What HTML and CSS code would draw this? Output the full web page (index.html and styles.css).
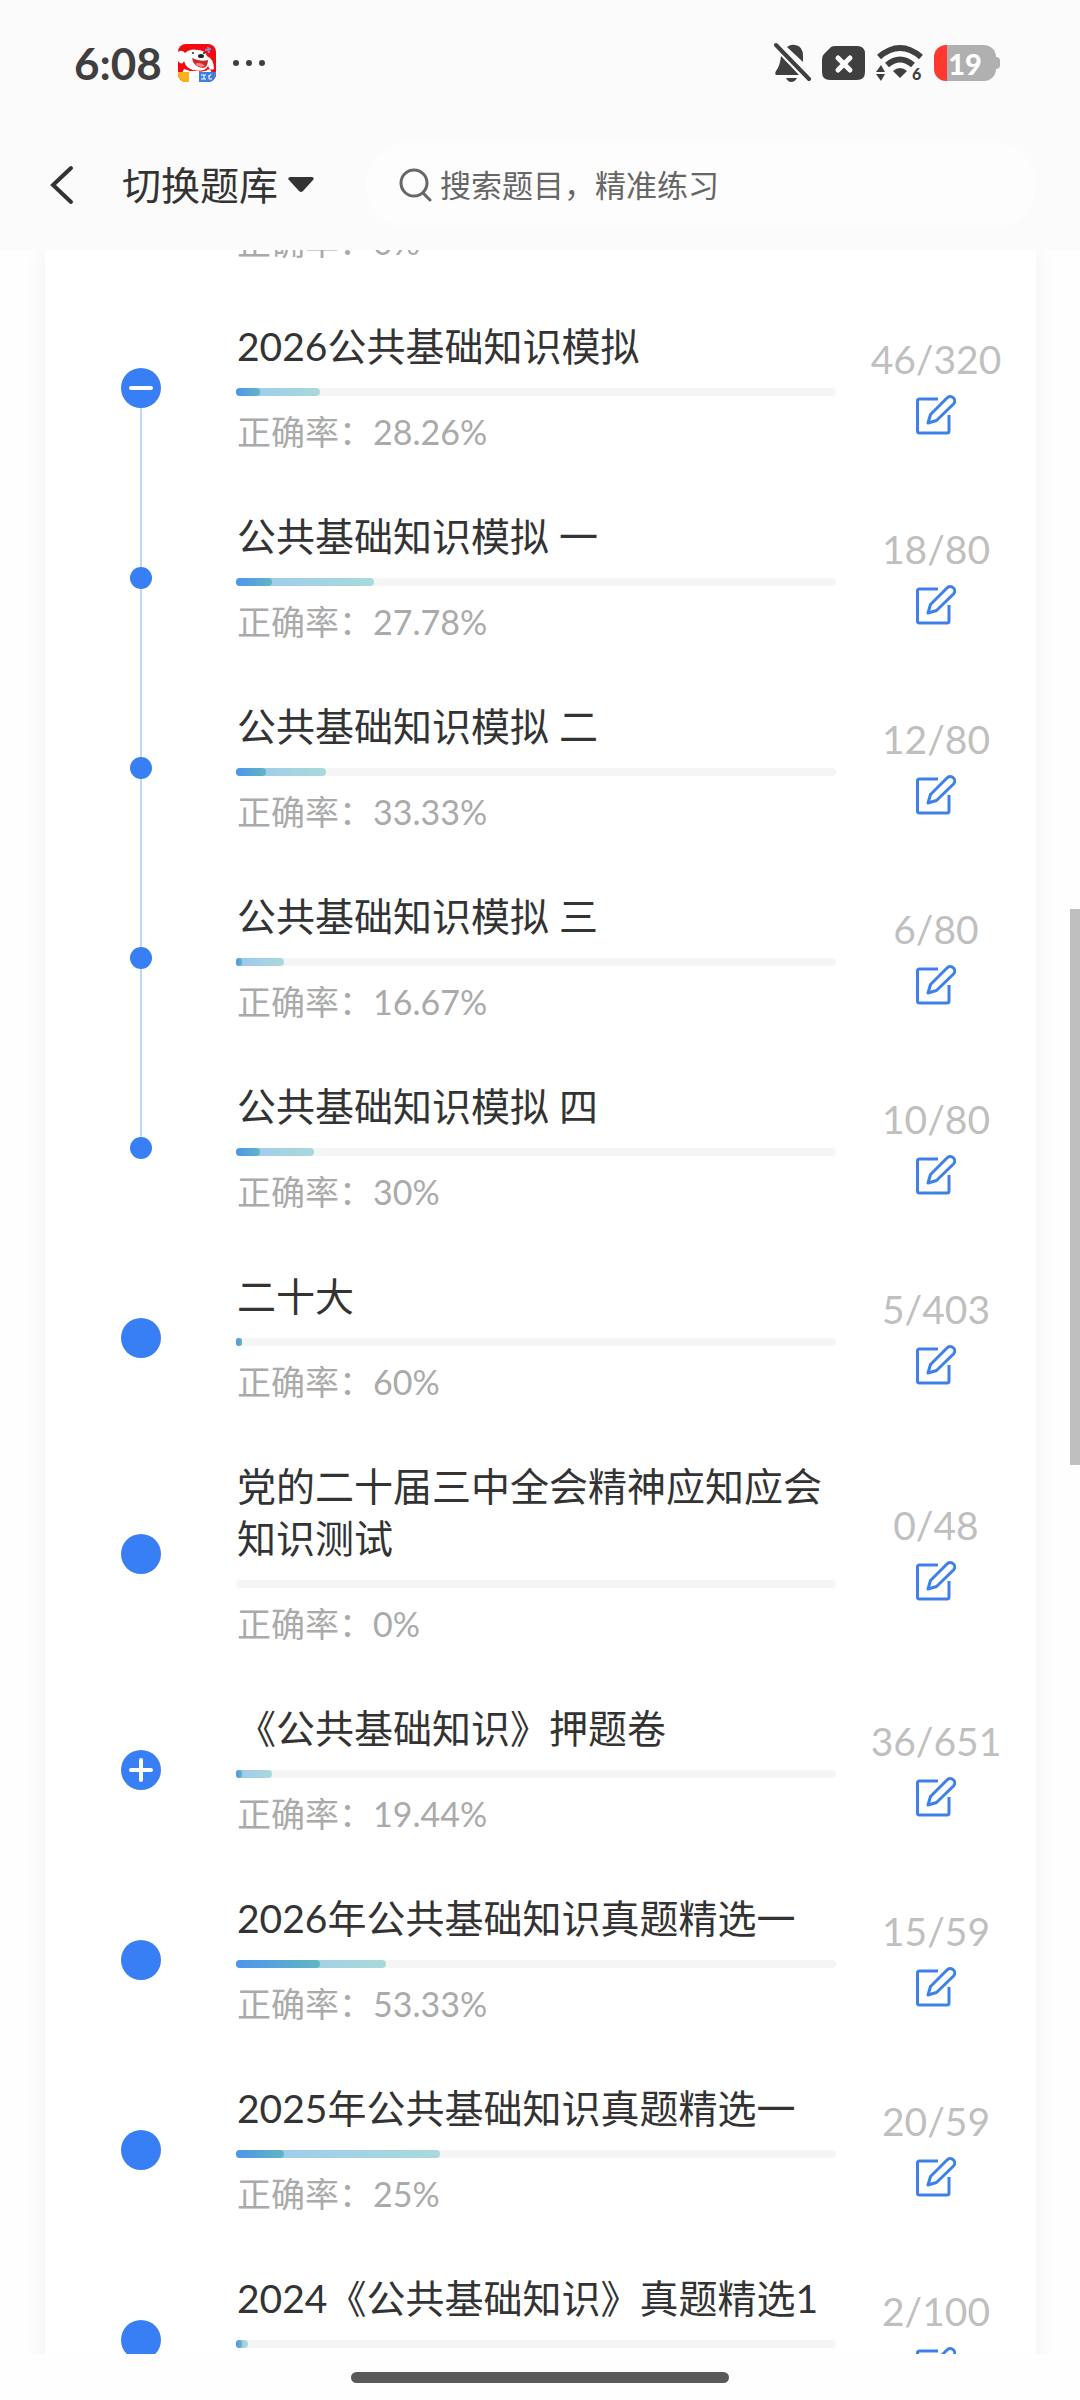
FILE: index.html
```
<!DOCTYPE html>
<html lang="zh-CN">
<head>
    <meta charset="UTF-8">
    <meta name="viewport" content="width=device-width, initial-scale=1.0">
    <title>切换题库</title>
    <link rel="stylesheet" href="styles.css">
</head>
<body>

    <svg class="sprite" aria-hidden="true">
        <symbol id="icon-edit" viewBox="0 0 40 40">
            <path d="M22 4H3.500Q1.500 4 1.500 6V36Q1.500 38 3.500 38H31Q33 38 33 36V20"/>
            <path d="M12 28L14.500 19.500L31 3A4.300 4.300 0 0 1 37.500 9L20.500 25.500Z"/>
        </symbol>
    </svg>

    <div class="status-bar">
        <span class="time">6:08</span>
        <svg class="app-icon" viewBox="0 0 38 38">
            <clipPath id="app-clip"><rect width="38" height="38" rx="8"/></clipPath>
            <g clip-path="url(#app-clip)">
                <rect width="38" height="38" fill="#f5090f"/>
                <path d="M0 8Q4 5 7 9Q12 4 20 6Q27 6 29 12Q36 15 36 25Q32 27 30 22Q28 27 20 27Q8 26 6 17Q4 22 0 17Z" fill="#fff"/>
                <path d="M14 14Q22 18 30 16Q30 23 25 24Q15 23 14 14Z" fill="#c92a2c"/>
                <path d="M17 20Q22 17 27 22Q21 24 17 20Z" fill="#ff8a80"/>
                <ellipse cx="23" cy="12" rx="3" ry="2" fill="#222"/>
                <circle cx="15" cy="9" r="1" fill="#222"/>
                <circle cx="26" cy="9" r="1" fill="#222"/>
                <path d="M27 6L33 5M30 3L31 9" stroke="#8d8bc4" stroke-width="2"/>
                <path d="M6 25Q18 30 32 25L34 29H4Z" fill="#fff"/>
                <path d="M9 25Q18 29 29 26" stroke="#f5090f" stroke-width="1" fill="none"/>
                <rect y="28" width="11" height="10" fill="#fbb11c"/>
                <rect x="11" y="27" width="10" height="11" fill="#fff"/>
                <rect x="21" y="28" width="17" height="10" fill="#3c80e0"/>
                <path d="M23 31H28M23 35H28M26 31V35M31 31V35H34M33 30L31 33" stroke="#fff" stroke-width="1" fill="none"/>
            </g>
        </svg>
        <svg class="more" viewBox="0 0 34 8" fill="#3f3f3f">
            <circle cx="4" cy="4" r="3"/><circle cx="17" cy="4" r="3"/><circle cx="30" cy="4" r="3"/>
        </svg>
        <div class="status-icons">
            <svg width="38" height="42" viewBox="0 0 38 42">
                <path d="M13 5Q17 2 21 3Q29 4 29 14V20ZM7 14Q6 24 2 29Q0 33 3 33H25Z" fill="#3f3f3f"/>
                <path d="M12 36H23Q21 40 17 40Q14 40 12 36Z" fill="#3f3f3f"/>
                <path d="M6 2L37 34" stroke="#fbfbfb" stroke-width="3"/>
                <path d="M2 3L35 37" stroke="#3f3f3f" stroke-width="4" stroke-linecap="round"/>
            </svg>
            <svg width="44" height="36" viewBox="0 0 44 36">
                <path d="M13 1H35Q43 1 43 9V27Q43 35 35 35H8Q0 35 0 27V14Q0 11 2 9L9 2Q11 1 13 1Z" fill="#3f3f3f"/>
                <path d="M16 13L28 25M28 13L16 25" stroke="#fff" stroke-width="5" stroke-linecap="round"/>
            </svg>
            <svg width="48" height="40" viewBox="0 0 48 40">
                <path d="M3 14Q24 -4 45 14" stroke="#3f3f3f" stroke-width="6" fill="none"/>
                <path d="M11 22Q24 11 37 22" stroke="#3f3f3f" stroke-width="6" fill="none"/>
                <path d="M17 28Q24 22 31 28L24 35Z" fill="#3f3f3f"/>
                <path d="M5 22L9 29H0ZM0 31H9L5 38Z" fill="#3f3f3f"/>
                <text x="36" y="37" font-size="16" font-weight="900" fill="#3f3f3f">6</text>
            </svg>
            <div class="battery"><span>19</span></div>
        </div>
    </div>

    <header class="top-bar">
        <button class="back" aria-label="返回">
            <svg width="24" height="40" viewBox="0 0 24 40"><path d="M21 3L3 20L21 37"/></svg>
        </button>
        <button class="switch">
            切换题库
            <svg width="26" height="16" viewBox="0 0 26 16"><path d="M2 0H24Q27 1 25 3L15 14Q13 16 11 14L1 3Q-1 1 2 0Z"/></svg>
        </button>
        <label class="search">
            <svg width="34" height="34" viewBox="0 0 34 34"><circle cx="16" cy="15" r="13"/><path d="M25 25L32 32"/></svg>
            <input type="search" placeholder="搜索题目，精准练习" aria-label="搜索题目">
        </label>
    </header>

    <main class="content">
        <ul class="card" id="bank-list">
            <li class="item-cut">
                <div class="info"><p class="rate">正确率：0%</p></div>
            </li>
        </ul>
        <div class="scrollbar"></div>
    </main>

    <footer class="home-bar"><span></span></footer>

    <script>
        // done / right: ancho de las dos barras, en %
        const items = [
            { name: '2026公共基础知识模拟', count: '46/320', rate: '28.26%', done: 14, right: 4, node: 'minus' },
            { name: '公共基础知识模拟 一', count: '18/80', rate: '27.78%', done: 23, right: 6, node: 'child' },
            { name: '公共基础知识模拟 二', count: '12/80', rate: '33.33%', done: 15, right: 5, node: 'child' },
            { name: '公共基础知识模拟 三', count: '6/80', rate: '16.67%', done: 8, right: 1, node: 'child' },
            { name: '公共基础知识模拟 四', count: '10/80', rate: '30%', done: 13, right: 4, node: 'child last' },
            { name: '二十大', count: '5/403', rate: '60%', done: 1, right: 1, node: '' },
            { name: '党的二十届三中全会精神应知应会知识测试', count: '0/48', rate: '0%', done: 0, right: 0, node: '' },
            { name: '《公共基础知识》押题卷', count: '36/651', rate: '19.44%', done: 6, right: 1, node: 'plus' },
            { name: '2026年公共基础知识真题精选一', count: '15/59', rate: '53.33%', done: 25, right: 14, node: '' },
            { name: '2025年公共基础知识真题精选一', count: '20/59', rate: '25%', done: 34, right: 8, node: '' },
            { name: '2024《公共基础知识》真题精选1', count: '2/100', rate: '', done: 2, right: 1, node: '' }
        ];

        function nodeHtml(node) {
            if (node === 'minus') {
                return '<button class="dot" aria-label="收起"><svg viewBox="0 0 40 40"><path d="M10 20H30"/></svg></button>';
            }
            if (node === 'plus') {
                return '<button class="dot" aria-label="展开"><svg viewBox="0 0 40 40"><path d="M10 20H30M20 10V30"/></svg></button>';
            }
            return '<span class="dot"></span>';
        }

        const list = document.getElementById('bank-list');

        items.forEach(item => {
            const li = document.createElement('li');
            li.className = 'item';
            li.innerHTML = `
                <div class="node ${item.node}">${nodeHtml(item.node)}</div>
                <div class="info">
                    <h3>${item.name}</h3>
                    <div class="track">
                        <div class="done" style="width: ${item.done}%"></div>
                        <div class="right" style="width: ${item.right}%"></div>
                    </div>
                    ${item.rate ? `<p class="rate">正确率：${item.rate}</p>` : '<p class="rate"></p>'}
                </div>
                <div class="side">
                    <span class="count">${item.count}</span>
                    <button class="edit" aria-label="练习"><svg><use href="#icon-edit"/></svg></button>
                </div>`;
            list.appendChild(li);
        });
    </script>

</body>
</html>
```
FILE: styles.css
```
* {
    box-sizing: border-box;
}

body {
    font-family: Lato, "Noto Sans CJK SC", sans-serif;
    background: #fefefe;
    color: #333;
    margin: 0;
    height: 100vh;
    display: flex;
    flex-direction: column;
}

button {
    border: 0;
    padding: 0;
    background: none;
    font: inherit;
    color: inherit;
    display: flex;
    align-items: center;
}

.sprite {
    display: none;
}

/* barra de estado */
.status-bar {
    display: flex;
    align-items: center;
    height: 126px;
    padding: 0 84px 0 74px;
    background: #fbfbfb;
    color: #3f3f3f;
    flex-shrink: 0;
}

.time {
    font-size: 44px;
    font-weight: bold;
}

.app-icon {
    width: 38px;
    height: 38px;
    margin-left: 16px;
}

.more {
    width: 34px;
    height: 8px;
    margin-left: 16px;
}

.status-icons {
    display: flex;
    align-items: center;
    gap: 10px;
    margin-left: auto;
}

.battery {
    display: flex;
    align-items: center;
    justify-content: center;
    width: 62px;
    height: 36px;
    border-radius: 12px;
    background: linear-gradient(to right, #ff3830 13px, #b0b0b0 13px);
    color: #fff;
    font-size: 29px;
    font-weight: 900;
    position: relative;
}

.battery::after {
    content: "";
    position: absolute;
    right: -4px;
    top: 12px;
    width: 4px;
    height: 12px;
    border-radius: 0 4px 4px 0;
    background: #b0b0b0;
}

/* cabecera */
.top-bar {
    display: flex;
    align-items: center;
    height: 124px;
    padding: 0 44px 6px 50px;
    background: #fbfbfb;
    flex-shrink: 0;
}

.back svg {
    fill: none;
    stroke: #333;
    stroke-width: 4;
    stroke-linecap: round;
}

.switch {
    margin-left: 48px;
    gap: 10px;
    font-size: 39px;
    line-height: 52px;
    fill: #333;
}

.search {
    flex: 1;
    display: flex;
    align-items: center;
    gap: 8px;
    height: 86px;
    margin-left: 52px;
    padding: 0 32px;
    border-radius: 43px;
    background: #fdfdfd;
}

.search svg {
    fill: none;
    stroke: #666;
    stroke-width: 3;
    stroke-linecap: round;
}

.search input {
    flex: 1;
    min-width: 0;
    border: 0;
    padding: 0;
    outline: none;
    background: none;
    font: inherit;
    font-size: 31px;
}

.search input::placeholder {
    color: #666;
}

/* lista */
.content {
    flex: 1;
    min-height: 0;
    overflow: hidden;
    padding: 0 44px 0 45px;
    position: relative;
}

.card {
    list-style: none;
    margin: 0;
    padding: 0;
    background: #fff;
    box-shadow: 0 0 24px rgba(0, 0, 0, 0.06);
}

.item {
    display: grid;
    grid-template-columns: 191px 1fr 200px;
}

/* fila de arriba, ya casi fuera de la vista */
.item-cut {
    display: flex;
    align-items: flex-end;
    height: 43px;
    padding-left: 191px;
}

.node {
    display: flex;
    flex-direction: column;
    align-items: center;
}

.node::before,
.node::after {
    content: "";
    flex: 1;
    width: 2px;
}

.minus::after,
.child::before,
.child::after {
    background: #bfd8fa;
}

.last::after {
    background: none;
}

.dot {
    width: 40px;
    height: 40px;
    border-radius: 50%;
    background: #387ff5;
}

.child .dot {
    width: 22px;
    height: 22px;
}

.dot svg {
    width: 40px;
    height: 40px;
    stroke: #fff;
    stroke-width: 4;
    stroke-linecap: round;
}

.info {
    padding: 27px 0 33px;
}

.info h3 {
    margin: 0 0 16px;
    padding-left: 1px;
    font-size: 39px;
    font-weight: normal;
    line-height: 52px;
}

.track {
    display: grid;
    height: 8px;
    margin-bottom: 18px;
    border-radius: 4px;
    background: #f5f5f5;
}

.done,
.right {
    grid-area: 1 / 1;
    border-radius: 4px;
}

.done {
    background: linear-gradient(to right, #9cc8f2, #a9d9da);
}

.right {
    background: linear-gradient(to right, #4f94ec, #5fb6c2);
}

.rate {
    margin: 0;
    padding-left: 1px;
    height: 36px;
    font-size: 34px;
    line-height: 36px;
    color: #aaa;
}

.side {
    display: flex;
    flex-direction: column;
    align-items: center;
    justify-content: center;
    gap: 10px;
    padding-bottom: 8px;
}

.count {
    font-size: 39px;
    line-height: 52px;
    color: #bfbfbf;
}

.edit svg {
    width: 40px;
    height: 40px;
    fill: none;
    stroke: #3d80e8;
    stroke-width: 3;
    stroke-linejoin: round;
}

.scrollbar {
    position: absolute;
    right: 0;
    top: 659px;
    width: 10px;
    height: 556px;
    background: #bfbfbf;
}

.home-bar {
    display: flex;
    justify-content: center;
    align-items: center;
    height: 46px;
    flex-shrink: 0;
}

.home-bar span {
    width: 35%;
    height: 11px;
    border-radius: 6px;
    background: #595959;
}
```
